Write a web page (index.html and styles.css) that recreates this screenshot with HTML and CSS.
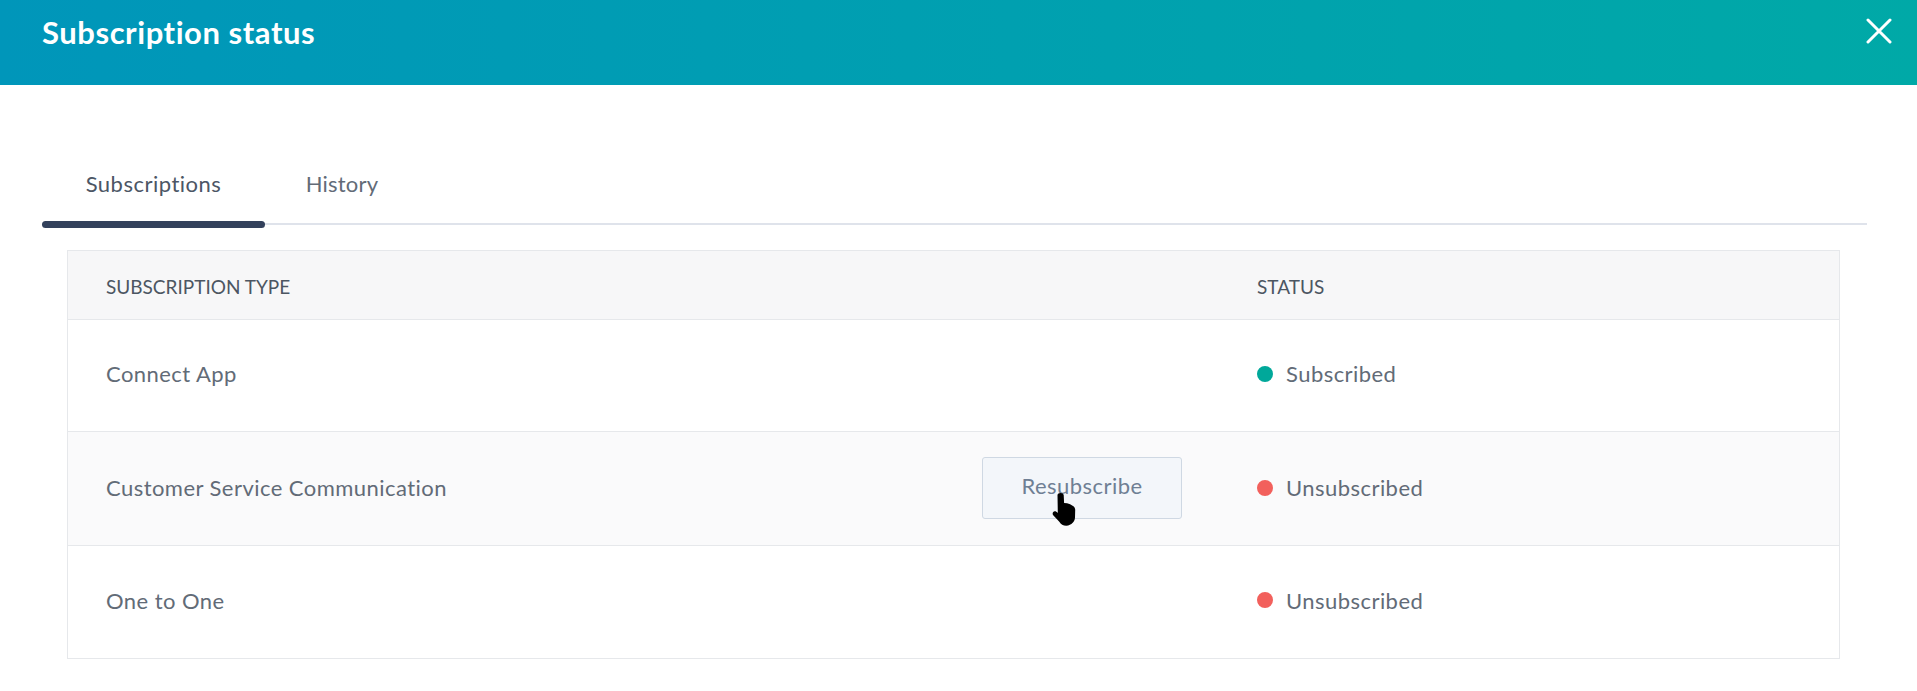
FILE: index.html
```html
<!DOCTYPE html>
<html lang="en">
<head>
<meta charset="utf-8">
<title>Subscription status</title>
<link rel="stylesheet" href="styles.css">
</head>
<body>
<header class="modal-header">
  <h1 class="modal-title">Subscription status</h1>
  <button class="close" aria-label="Close">
    <svg viewBox="0 0 26 26" width="26" height="26"><path d="M2 2 L24 24 M24 2 L2 24" fill="none" stroke="#fff" stroke-width="3" stroke-linecap="round"/></svg>
  </button>
</header>
<main class="modal-body">
  <nav class="tabs">
    <a class="tab tab-active">Subscriptions</a>
    <a class="tab">History</a>
  </nav>
  <section class="table">
    <div class="row row-head">
      <div class="cell-type">SUBSCRIPTION TYPE</div>
      <div class="cell-status">STATUS</div>
    </div>
    <div class="row row-a">
      <div class="cell-type">Connect App</div>
      <div class="cell-status"><span class="dot dot-green"></span>Subscribed</div>
    </div>
    <div class="row row-b row-hover">
      <div class="cell-type">Customer Service Communication</div>
      <div class="cell-action">
        <button class="btn">Resubscribe</button>
        <svg class="cursor" viewBox="0 0 24 36" width="24" height="36"><path d="M5.500 3c0-2.800 6-2.800 6.200 0l.4 8 3 .3 3 1 2.500 1.400c1.800 1 2.600 2.200 2.600 4.300l-.2 7.500c-.2 2.400-.9 3.900-2.300 5.200-1.600 1.600-3.800 3-6.400 3-3.200 0-5.400-1.400-7-4L1 23c-1-2 .2-3.800 1.800-3.800 1 0 2 .7 3 1.700Z" fill="#000"/></svg>
      </div>
      <div class="cell-status"><span class="dot dot-red"></span>Unsubscribed</div>
    </div>
    <div class="row row-c">
      <div class="cell-type">One to One</div>
      <div class="cell-status"><span class="dot dot-red"></span>Unsubscribed</div>
    </div>
  </section>
</main>
</body>
</html>
```
FILE: styles.css
```css
* { box-sizing: border-box; }
html, body { margin: 0; height: 100%; }
body {
  background: #fff;
  color: #626b77;
  font-family: Lato, "Noto Sans", sans-serif;
  overflow: hidden;
}
.modal-header {
  height: 85px;
  padding: 0 25px 21px 42px;
  display: flex;
  align-items: center;
  justify-content: space-between;
  background: linear-gradient(to right, #0096ba, #00a9a7);
}
.modal-title {
  margin: 0;
  color: #fff;
  font-size: 31px;
  font-weight: 700;
  letter-spacing: .55px;
}
.close {
  padding: 0;
  border: 0;
  background: none;
  display: flex;
  margin-bottom: 3px;
}
.modal-body { padding: 0 50px 0 42px; }
.tabs {
  margin-top: 56px;
  height: 84px;
  display: flex;
  border-bottom: 2px solid #dfe3eb;
}
.tab {
  position: relative;
  width: 154px;
  padding-top: 29px;
  text-align: center;
  font-size: 22px;
  letter-spacing: .2px;
  color: #626b77;
}
.tab-active {
  width: 223px;
  color: #4c5665;
  letter-spacing: .5px;
}
.tab-active::after {
  content: "";
  position: absolute;
  left: 0;
  right: 0;
  bottom: -5px;
  height: 7px;
  border-radius: 4px;
  background: #33415c;
}
.table {
  margin: 25px 27px 0 25px;
  border: 1px solid #e6e8eb;
}
.row {
  display: flex;
  align-items: center;
  padding-left: 38px;
  border-top: 1px solid #e6e8eb;
  font-size: 22px;
  letter-spacing: .45px;
}
.row-head {
  height: 68px;
  padding-top: 3px;
  border-top: 0;
  background: #f7f7f8;
  font-size: 19px;
  letter-spacing: 0;
  color: #4c5662;
}
.row-a { height: 112px; }
.row-b { height: 114px; }
.row-c { height: 113px; }
.row-hover { background: #fafafb; }
.cell-type { flex: 1; }
.row-a .cell-type, .row-a .cell-status,
.row-c .cell-type, .row-c .cell-status { padding-bottom: 4px; }
.row-b .cell-type, .row-b .cell-status { padding-bottom: 2px; }
.cell-status {
  width: 582px;
  display: flex;
  align-items: center;
}
.cell-action {
  position: relative;
  margin-right: 75px;
  margin-bottom: 2px;
}
.dot {
  width: 16px;
  height: 16px;
  margin-right: 13px;
  border-radius: 50%;
}
.dot-green { background: #00a89a; }
.dot-red { background: #f2605c; }
.btn {
  display: block;
  width: 200px;
  height: 62px;
  padding: 0 0 5px;
  border: 1px solid #cfd8e3;
  border-radius: 3px;
  background: #f3f6fa;
  color: #6f7f94;
  font: inherit;
  letter-spacing: inherit;
}
.cursor {
  position: absolute;
  left: 70px;
  top: 35px;
}
```
